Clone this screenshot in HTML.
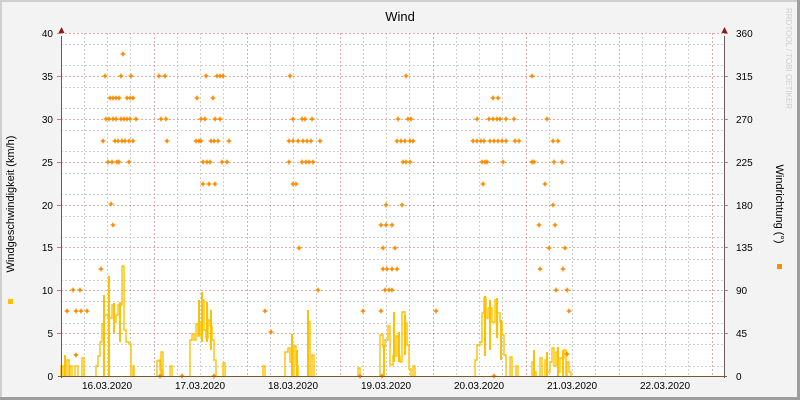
<!DOCTYPE html>
<html><head><meta charset="utf-8"><style>
html,body{margin:0;padding:0;background:#f3f3f3;}
svg{display:block;font-family:"Liberation Sans","DejaVu Sans",sans-serif;}
</style></head><body>
<svg width="800" height="400" viewBox="0 0 800 400" xmlns="http://www.w3.org/2000/svg">
<defs>
<path id="d" d="M0,-3 L1,-1 L3,0 L1,1 L0,3 L-1,1 L-3,0 L-1,-1Z" fill="#ff8c00"/>
</defs>
<rect x="0" y="0" width="800" height="400" fill="#f3f3f3"/>
<rect x="0" y="0" width="800" height="2" fill="#cfcfcf"/>
<rect x="0" y="0" width="2" height="400" fill="#cfcfcf"/>
<rect x="797" y="0" width="3" height="400" fill="#9e9e9e"/>
<rect x="0" y="397" width="800" height="3" fill="#9e9e9e"/>
<rect x="61" y="33" width="663" height="343" fill="#ffffff"/>
<g stroke="#d0d0d0" stroke-width="1" stroke-dasharray="2,2" fill="none">
<path d="M61,44.5H724M61,65.5H724M61,87.5H724M61,108.5H724M61,130.5H724M61,151.5H724M61,173.5H724M61,194.5H724M61,216.5H724M61,237.5H724M61,259.5H724M61,280.5H724M61,301.5H724M61,323.5H724M61,344.5H724M61,366.5H724"/>
<path d="M84.5,33V376M107.5,33V376M130.5,33V376M177.5,33V376M200.5,33V376M223.5,33V376M270.5,33V376M293.5,33V376M316.5,33V376M363.5,33V376M386.5,33V376M409.5,33V376M456.5,33V376M479.5,33V376M502.5,33V376M549.5,33V376M572.5,33V376M595.5,33V376M642.5,33V376M665.5,33V376M688.5,33V376"/>
</g>
<g stroke="#e6a8a8" stroke-width="1" stroke-dasharray="2,2" fill="none">
<path d="M61,33.5H724M61,76.5H724M61,119.5H724M61,162.5H724M61,205.5H724M61,247.5H724M61,290.5H724M61,333.5H724"/>
<path d="M154.5,33V376M247.5,33V376M340.5,33V376M433.5,33V376M526.5,33V376M619.5,33V376M712.5,33V376"/>
</g>
<g stroke="#c08080" stroke-width="1">
<path d="M57,33.5H61M57,76.5H61M57,119.5H61M57,162.5H61M57,205.5H61M57,247.5H61M57,290.5H61M57,333.5H61"/>
<path d="M724,33.5H728M724,76.5H728M724,119.5H728M724,162.5H728M724,205.5H728M724,247.5H728M724,290.5H728M724,333.5H728"/>
</g>
<!-- yellow speed -->
<g fill="none" stroke="#ffc000" stroke-width="1.4">
<path d="M61,376V366H63V376M67,376V360H69V376M70,376V366H72V376M75,376V366H78V376M82,376V358H84V376
M96,376V366H98V356H100V342H102V324H104V315H108V318H112V305H114V322H116V315H118V305H122V266H124V330H126V342H129V344H131V376M133,376V366H134V376
M157,376V361H159V360H160V370H162V376M161,376V352H163V376M170,376V366H172V376M190,376V340H192V334H194V340H196V324H198V336H200V322H202V300H204V330H206V338H208V320H210V326H212V340H214V360H216V376M223,376V363H225V376
M263,376V366H265V376M285,376V352H288V348H290V362H292V376M294,376V346H296V366H298V376M308,376V322H310V376M312,376V355H314V376
M358,376V368H360V376M380,376V335H383V347H385V340H388V326H390V365H393V356H396V336H398V356H400V362H402V312H405V323H407V345H409V369H411V376M413,376V366H415V376
M475,376V360H477V345H480V342H482V313H484V298H486V318H488V308H492V322H495V300H497V313H500V322H502V335H504V355H506V376M510,376V357H512V376M516,376V366H518V376
M532,376V362H534V372H536V376M540,376V358H542V376M545,376V360H547V372H550V362H552V348H554V366H556V352H558V372H560V358H564V350H566V376M567,376V362H569V372H571V376"/>
</g>
<g fill="#ffc000">
<rect x="103" y="295" width="2" height="81"/><rect x="108" y="276" width="2" height="100"/><rect x="113" y="303" width="2" height="30"/><rect x="119" y="302" width="2" height="40"/><rect x="64" y="355" width="2" height="21"/>
<rect x="201" y="292" width="2" height="50"/><rect x="206" y="302" width="2" height="40"/><rect x="210" y="310" width="2" height="40"/><rect x="198" y="300" width="2" height="35"/>
<rect x="291" y="334" width="2" height="42"/><rect x="307" y="310" width="2" height="66"/><rect x="296" y="350" width="2" height="26"/>
<rect x="393" y="312" width="2" height="50"/><rect x="398" y="332" width="2" height="30"/><rect x="404" y="315" width="2" height="40"/><rect x="383" y="345" width="2" height="31"/>
<rect x="484" y="296" width="2" height="60"/><rect x="489" y="300" width="2" height="50"/><rect x="496" y="298" width="2" height="40"/><rect x="500" y="320" width="2" height="40"/>
<rect x="533" y="350" width="2" height="26"/><rect x="557" y="347" width="2" height="29"/><rect x="562" y="350" width="2" height="26"/><rect x="546" y="352" width="2" height="24"/>
</g>
<!-- direction points -->
<g>
<use href="#d" x="123" y="54"/>
<use href="#d" x="105" y="76"/><use href="#d" x="121" y="76"/><use href="#d" x="131" y="76"/><use href="#d" x="159" y="76"/><use href="#d" x="165" y="76"/><use href="#d" x="206" y="76"/><use href="#d" x="217" y="76"/><use href="#d" x="220" y="76"/><use href="#d" x="223" y="76"/><use href="#d" x="290" y="76"/><use href="#d" x="406" y="76"/><use href="#d" x="532" y="76"/>
<use href="#d" x="110" y="98"/><use href="#d" x="113" y="98"/><use href="#d" x="116" y="98"/><use href="#d" x="119" y="98"/><use href="#d" x="127" y="98"/><use href="#d" x="130" y="98"/><use href="#d" x="133" y="98"/><use href="#d" x="197" y="98"/><use href="#d" x="213" y="98"/><use href="#d" x="493" y="98"/><use href="#d" x="498" y="98"/>
<use href="#d" x="106" y="119"/><use href="#d" x="109" y="119"/><use href="#d" x="113" y="119"/><use href="#d" x="116" y="119"/><use href="#d" x="121" y="119"/><use href="#d" x="124" y="119"/><use href="#d" x="127" y="119"/><use href="#d" x="130" y="119"/><use href="#d" x="136" y="119"/><use href="#d" x="161" y="119"/><use href="#d" x="166" y="119"/><use href="#d" x="201" y="119"/><use href="#d" x="205" y="119"/><use href="#d" x="215" y="119"/><use href="#d" x="220" y="119"/><use href="#d" x="293" y="119"/><use href="#d" x="302" y="119"/><use href="#d" x="305" y="119"/><use href="#d" x="312" y="119"/><use href="#d" x="398" y="119"/><use href="#d" x="408" y="119"/><use href="#d" x="411" y="119"/><use href="#d" x="477" y="119"/><use href="#d" x="489" y="119"/><use href="#d" x="493" y="119"/><use href="#d" x="497" y="119"/><use href="#d" x="500" y="119"/><use href="#d" x="506" y="119"/><use href="#d" x="514" y="119"/><use href="#d" x="547" y="119"/>
<use href="#d" x="103" y="141"/><use href="#d" x="115" y="141"/><use href="#d" x="118" y="141"/><use href="#d" x="122" y="141"/><use href="#d" x="125" y="141"/><use href="#d" x="129" y="141"/><use href="#d" x="133" y="141"/><use href="#d" x="167" y="141"/><use href="#d" x="196" y="141"/><use href="#d" x="199" y="141"/><use href="#d" x="201" y="141"/><use href="#d" x="211" y="141"/><use href="#d" x="214" y="141"/><use href="#d" x="218" y="141"/><use href="#d" x="229" y="141"/><use href="#d" x="289" y="141"/><use href="#d" x="293" y="141"/><use href="#d" x="298" y="141"/><use href="#d" x="303" y="141"/><use href="#d" x="307" y="141"/><use href="#d" x="311" y="141"/><use href="#d" x="320" y="141"/><use href="#d" x="397" y="141"/><use href="#d" x="401" y="141"/><use href="#d" x="405" y="141"/><use href="#d" x="410" y="141"/><use href="#d" x="413" y="141"/><use href="#d" x="473" y="141"/><use href="#d" x="477" y="141"/><use href="#d" x="481" y="141"/><use href="#d" x="484" y="141"/><use href="#d" x="490" y="141"/><use href="#d" x="494" y="141"/><use href="#d" x="498" y="141"/><use href="#d" x="502" y="141"/><use href="#d" x="506" y="141"/><use href="#d" x="515" y="141"/><use href="#d" x="519" y="141"/><use href="#d" x="553" y="141"/><use href="#d" x="558" y="141"/>
<use href="#d" x="108" y="162"/><use href="#d" x="112" y="162"/><use href="#d" x="117" y="162"/><use href="#d" x="119" y="162"/><use href="#d" x="129" y="162"/><use href="#d" x="203" y="162"/><use href="#d" x="207" y="162"/><use href="#d" x="210" y="162"/><use href="#d" x="222" y="162"/><use href="#d" x="227" y="162"/><use href="#d" x="289" y="162"/><use href="#d" x="302" y="162"/><use href="#d" x="306" y="162"/><use href="#d" x="309" y="162"/><use href="#d" x="313" y="162"/><use href="#d" x="403" y="162"/><use href="#d" x="406" y="162"/><use href="#d" x="410" y="162"/><use href="#d" x="482" y="162"/><use href="#d" x="485" y="162"/><use href="#d" x="487" y="162"/><use href="#d" x="503" y="162"/><use href="#d" x="532" y="162"/><use href="#d" x="534" y="162"/><use href="#d" x="554" y="162"/><use href="#d" x="562" y="162"/>
<use href="#d" x="203" y="184"/><use href="#d" x="209" y="184"/><use href="#d" x="215" y="184"/><use href="#d" x="293" y="184"/><use href="#d" x="296" y="184"/><use href="#d" x="483" y="184"/><use href="#d" x="545" y="184"/>
<use href="#d" x="111" y="204"/><use href="#d" x="386" y="205"/><use href="#d" x="402" y="205"/><use href="#d" x="553" y="205"/>
<use href="#d" x="113" y="225"/><use href="#d" x="381" y="225"/><use href="#d" x="386" y="225"/><use href="#d" x="392" y="225"/><use href="#d" x="539" y="225"/><use href="#d" x="555" y="225"/>
<use href="#d" x="299" y="248"/><use href="#d" x="383" y="248"/><use href="#d" x="395" y="248"/><use href="#d" x="549" y="248"/><use href="#d" x="565" y="248"/>
<use href="#d" x="101" y="269"/><use href="#d" x="383" y="269"/><use href="#d" x="387" y="269"/><use href="#d" x="392" y="269"/><use href="#d" x="397" y="269"/><use href="#d" x="540" y="269"/><use href="#d" x="563" y="269"/>
<use href="#d" x="73" y="290"/><use href="#d" x="80" y="290"/><use href="#d" x="318" y="290"/><use href="#d" x="385" y="290"/><use href="#d" x="389" y="290"/><use href="#d" x="392" y="290"/><use href="#d" x="556" y="290"/><use href="#d" x="567" y="290"/>
<use href="#d" x="67" y="311"/><use href="#d" x="76" y="311"/><use href="#d" x="81" y="311"/><use href="#d" x="87" y="311"/><use href="#d" x="265" y="311"/><use href="#d" x="363" y="311"/><use href="#d" x="381" y="311"/><use href="#d" x="436" y="311"/><use href="#d" x="569" y="311"/>
<use href="#d" x="271" y="332"/><use href="#d" x="76" y="355"/><use href="#d" x="567" y="354"/>
<use href="#d" x="160" y="376"/><use href="#d" x="182" y="376"/><use href="#d" x="214" y="376"/><use href="#d" x="360" y="376"/><use href="#d" x="382" y="376"/><use href="#d" x="494" y="376"/>
</g>
<!-- axes -->
<path d="M61.5,36V378M724.5,36V378" stroke="#6a5a5a" stroke-width="1"/>
<path d="M58,376.5H727" stroke="#7a5a2a" stroke-width="1"/>
<path d="M58.5,33L61.5,27L64.5,33Z" fill="#8b1a1a"/>
<path d="M721.5,33L724.5,27L727.5,33Z" fill="#8b1a1a"/>
<g font-size="10" fill="#000">
<g text-anchor="end">
<text x="53" y="37">40</text><text x="53" y="80">35</text><text x="53" y="123">30</text><text x="53" y="166">25</text><text x="53" y="209">20</text><text x="53" y="251">15</text><text x="53" y="294">10</text><text x="53" y="337">5</text><text x="53" y="380">0</text>
</g>
<g text-anchor="start">
<text x="736" y="37">360</text><text x="736" y="80">315</text><text x="736" y="123">270</text><text x="736" y="166">225</text><text x="736" y="209">180</text><text x="736" y="251">135</text><text x="736" y="294">90</text><text x="736" y="337">45</text><text x="736" y="380">0</text>
</g>
<g text-anchor="middle">
<text x="107" y="389">16.03.2020</text><text x="200" y="389">17.03.2020</text><text x="293" y="389">18.03.2020</text><text x="386" y="389">19.03.2020</text><text x="479" y="389">20.03.2020</text><text x="572" y="389">21.03.2020</text><text x="665" y="389">22.03.2020</text>
</g>
</g>
<text x="400" y="21" font-size="13" text-anchor="middle" fill="#000">Wind</text>
<text transform="translate(14,204) rotate(-90)" font-size="11" text-anchor="middle" fill="#000">Windgeschwindigkeit (km/h)</text>
<text transform="translate(776,204) rotate(90)" font-size="11" text-anchor="middle" fill="#000">Windrichtung (°)</text>
<text transform="translate(786,8) rotate(90)" font-size="8" fill="#cfcfcf">RRDTOOL / TOBI OETIKER</text>
<rect x="8" y="299" width="5" height="5" fill="#ffc000"/>
<rect x="777" y="264" width="5" height="5" fill="#ff8c00"/>
</svg>
</body></html>
